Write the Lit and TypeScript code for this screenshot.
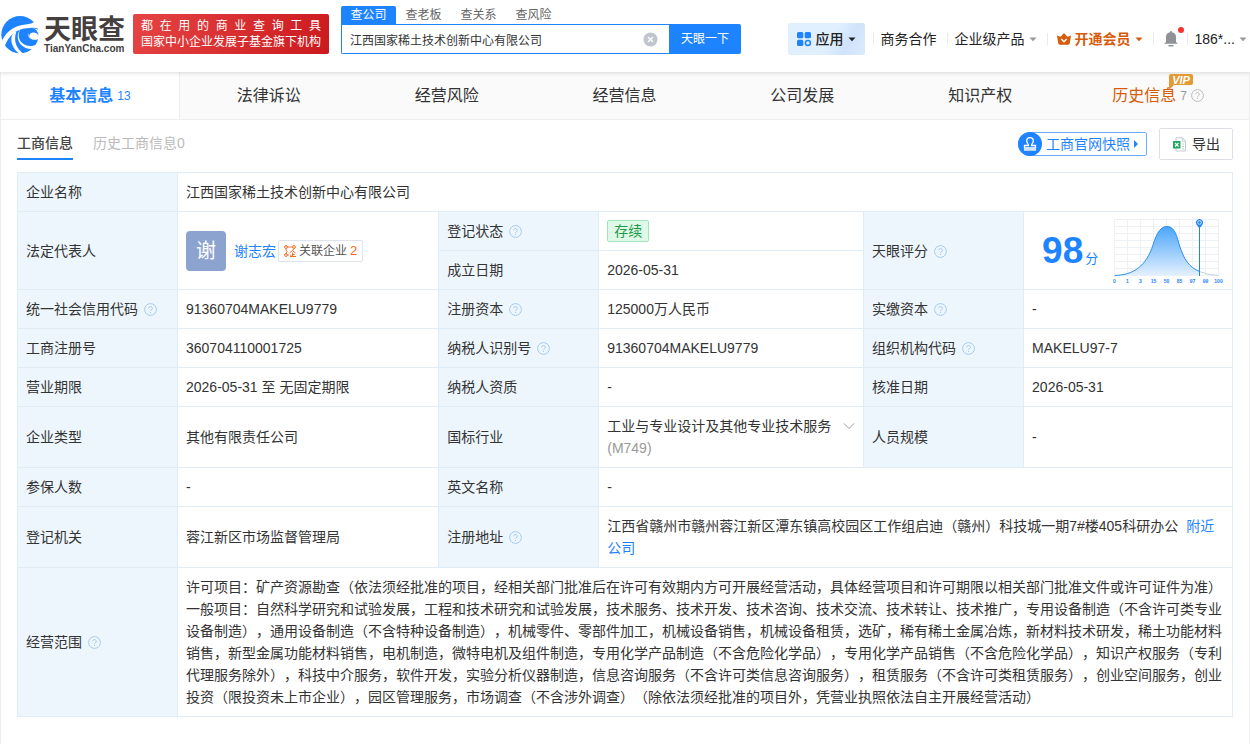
import { LitElement, html, css, svg } from "lit";
import { customElement, state } from "lit/decorators.js";

const base = css`
  * { box-sizing: border-box; }
  a { color: inherit; text-decoration: none; }
  button, input {
    font: inherit; color: inherit; margin: 0; padding: 0;
    border: 0; background: none; border-radius: 0;
  }
  button { cursor: pointer; }
  svg { display: block; flex: none; }
`;

const caret = html`<svg width="8" height="5" viewBox="0 0 8 5" aria-hidden="true"><path d="M.5.5h7L4 4.300z" fill="currentColor"/></svg>`;

@customElement("help-icon")
class HelpIcon extends LitElement {
  static styles = css`
    :host { display: inline-block; width: 13px; height: 13px; color: #a3cbee; vertical-align: -2px; }
    svg { display: block; width: 100%; height: 100%; }
  `;
  render() {
    return html`<svg viewBox="0 0 13 13" fill="none" stroke="currentColor">
      <circle cx="6.500" cy="6.500" r="5.900"/>
      <path d="M4.700 5.300a1.800 1.700 0 1 1 2.800 1.400c-.7.5-1 .7-1 1.400"/>
      <path d="M6.500 9v1"/>
    </svg>`;
  }
}

@customElement("site-header")
class SiteHeader extends LitElement {
  static styles = [base, css`
    :host { display: block; position: relative; background: #fff; box-shadow: 0 1px 4px rgba(0, 0, 0, 0.14); }
    .bar { display: flex; align-items: flex-end; padding: 6px 3px 18px 0; }
    .logo { display: flex; align-items: center; gap: 4px; color: #453f3f; }
    .wordmark { display: flex; flex-direction: column; padding-top: 2px; }
    .name { font-size: 27px; font-weight: 700; line-height: 28px; }
    .domain { font-size: 10px; font-weight: 700; line-height: 10px; }
    .slogan {
      margin-left: 8px; padding: 4px 8px; width: 196px; height: 40px; border-radius: 2px;
      background: linear-gradient(110deg, #e64444, #cb1a1e); color: #fff;
      font-size: 12px; line-height: 16px;
    }
    .slogan div { text-align-last: justify; white-space: nowrap; }
    .search { margin-left: 12px; flex: 0 1 400px; min-width: 280px; }
    .kinds { display: flex; font-size: 12px; line-height: 18px; color: #666; }
    .kinds button { width: 55px; }
    .kinds .on { background: #1e83ff; color: #fff; border-radius: 2px 2px 0 0; }
    .field { display: flex; height: 30px; font-size: 12px; }
    .box {
      flex: 1; min-width: 0; display: flex; align-items: center; padding: 0 11px 0 8px;
      border: 1px solid #1e83ff; border-right: 0; border-radius: 0 0 0 2px;
    }
    .box input { flex: 1; min-width: 0; height: 28px; outline: 0; color: #333; }
    .go { width: 72px; background: #1e83ff; color: #fff; border-radius: 0 2px 2px 0; }
    nav { margin-left: auto; display: flex; align-items: center; height: 30px; font-size: 14px; color: #222; white-space: nowrap; }
    .apps {
      display: flex; align-items: center; gap: 4px; height: 32px; padding: 0 9px 0 8px; margin-right: 8px;
      border-radius: 2px; background: linear-gradient(120deg, #e0f0ff 55%, #cfe3fb 75%, #dcebfd); font-weight: 500;
    }
    .item { display: flex; align-items: center; gap: 4px; padding: 0 10px 0 8px; position: relative; }
    .item::before { content: ""; position: absolute; left: 0; top: 50%; margin-top: -6px; width: 1px; height: 12px; background: #e8eaee; }
    .grey { color: #999; display: flex; }
    .vip { color: #d65b0a; font-weight: 700; padding-left: 10px; }
    .bell { color: #8f9296; padding: 0 9px 0 11px; }
    .dot { position: absolute; right: 3px; top: -4px; width: 6px; height: 6px; border-radius: 50%; background: #f7322f; }
    .user { padding-right: 0; }
  `];

  @state() kind = 0;

  render() {
    return html`<header class="bar">
      <a class="logo" href="#" aria-label="天眼查">
        <svg width="40" height="40" viewBox="0 6 120 120">
          <circle cx="60" cy="68" r="56" fill="#1e83ff"/>
          <g fill="#fff">
            <path d="M2 96C14 62 38 42 72 38C86 37 94 36 106 28L122 52C106 46 92 46 80 49C48 52 26 70 13 106z"/>
            <path d="M41 61C27 82 34 108 60 127L70 125C47 107 40 84 49 59z"/>
            <path d="M62 50C52 66 54 88 74 98C90 106 108 103 122 88L114 106C98 114 76 112 63 98C50 84 50 64 62 50z"/>
            <path d="M122 60C108 44 88 48 84 62C82 74 92 84 104 83C110 83 116 82 122 78z"/>
          </g>
          <path d="M90 48C104 46 114 56 116 70C112 64 104 60 96 62C90 63 87 68 88 74C82 62 82 52 90 48z" fill="#1e83ff"/>
        </svg>
        <span class="wordmark"><span class="name">天眼查</span><span class="domain">TianYanCha.com</span></span>
      </a>
      <div class="slogan"><div>都 在 用 的 商 业 查 询 工 具</div><div>国家中小企业发展子基金旗下机构</div></div>
      <form class="search" @submit=${(e: Event) => e.preventDefault()}>
        <div class="kinds">${["查公司", "查老板", "查关系", "查风险"].map((t, i) => html`
          <button type="button" class=${i === this.kind ? "on" : ""} @click=${() => (this.kind = i)}>${t}</button>`)}
        </div>
        <div class="field">
          <div class="box">
            <input type="text" aria-label="搜索" value="江西国家稀土技术创新中心有限公司">
            <button type="button" aria-label="清空"><svg width="15" height="15" viewBox="0 0 15 15"><circle cx="7.500" cy="7.500" r="7" fill="#c0c4cc"/><path d="M5 5l5 5M10 5l-5 5" stroke="#fff" stroke-width="1.400"/></svg></button>
          </div>
          <button class="go" type="submit">天眼一下</button>
        </div>
      </form>
      <nav>
        <button class="apps">
          <svg width="16" height="16" viewBox="0 0 16 16" fill="#1e83ff"><rect x="1" y="1" width="6.300" height="6.300" rx="1.500"/><rect x="8.700" y="1" width="6.300" height="6.300" rx="1.500"/><rect x="1" y="8.700" width="6.300" height="6.300" rx="1.500"/><circle cx="11.900" cy="11.900" r="2.500" fill="none" stroke="#1e83ff" stroke-width="1.500"/></svg>
          应用${caret}
        </button>
        <a class="item" href="#">商务合作</a>
        <a class="item" href="#">企业级产品<span class="grey">${caret}</span></a>
        <a class="item vip" href="#">
          <svg width="14" height="14" viewBox="0 0 14 14"><path d="M0 3.500l3.700 1.200L7 1l3.300 3.700L14 3.500 12.800 11q-.2 1.800-1.600 1.800H2.800Q1.400 12.800 1.200 11z" fill="#d65b0a"/><path d="M4.300 7l2.700 2.700L9.700 7" fill="none" stroke="#fff" stroke-width="1.500"/></svg>
          开通会员${caret}
        </a>
        <a class="item bell" href="#" aria-label="消息">
          <svg width="14" height="16" viewBox="0 0 14 16" fill="currentColor"><path d="M6.200 0h1.600v1.300A4.800 4.800 0 0 1 12 6v5l2 1.800H0L2 11V6a4.800 4.800 0 0 1 4.200-4.700zM4.500 14h5v1.500h-5z"/></svg>
          <span class="dot"></span>
        </a>
        <a class="item user" href="#">186*...<span class="grey">${caret}</span></a>
      </nav>
    </header>`;
  }
}

@customElement("section-tabs")
class SectionTabs extends LitElement {
  static styles = [base, css`
    :host { display: block; }
    .tabs { display: flex; height: 48px; padding-right: 2px; background: #fafafa; border-bottom: 1px solid #eee; }
    .tab { flex: 1; display: flex; align-items: center; justify-content: center; gap: 4px; font-size: 16px; color: #333; white-space: nowrap; }
    .on { background: #fff; color: #1e83ff; font-weight: 700; border-right: 1px solid #eee; }
    .count { font-size: 12px; font-weight: 400; }
    .history { color: #d65b0a; }
    .history .count { color: #999; }
    .history help-icon { color: #bbb; }
    .anchor { position: relative; }
    .badge { position: absolute; left: 57px; top: -11px; }
  `];
  render() {
    return html`<nav class="tabs">
      <a class="tab on" href="#">基本信息<span class="count">13</span></a>
      ${["法律诉讼", "经营风险", "经营信息", "公司发展", "知识产权"].map(t => html`<a class="tab" href="#">${t}</a>`)}
      <a class="tab history" href="#">
        <span class="anchor">历史信息
          <svg class="badge" width="24" height="18" viewBox="0 0 24 18"><path d="M2 0h20q2 0 2 2v7q0 2-2 2H5l-4 4q-1 1-1-1V2q0-2 2-2z" fill="#e39a33"/><text x="12" y="9.500" text-anchor="middle" font-family="Liberation Sans, sans-serif" font-size="11" font-weight="700" font-style="italic" fill="#fff">VIP</text></svg></span>
        <span class="count">7</span><help-icon></help-icon>
      </a>
    </nav>`;
  }
}

const TICKS = ["0", "1", "3", "15", "50", "85", "97", "99", "100"];

@customElement("score-chart")
class ScoreChart extends LitElement {
  static styles = css`
    :host { display: block; }
    svg { display: block; }
  `;
  render() {
    return html`<svg width="114" height="66" viewBox="0 0 114 66" role="img" aria-label="天眼评分分布">
      <defs><linearGradient id="fill" x1="0" y1="0" x2="0" y2="1"><stop offset="0" stop-color="#4ba5fb"/><stop offset="1" stop-color="#e3f0fd"/></linearGradient></defs>
      <g stroke="#edf1f6">
        ${TICKS.map((_, i) => svg`<path d=${`M${4.500 + i * 13} 1.500v56`}/>`)}
        ${TICKS.map((_, i) => svg`<path d=${`M4.500 ${1.500 + i * 7}h104`}/>`)}
      </g>
      <path d="M4.500 57.500C24 57 36 48 43 27C47 14 51 8.500 57 8.500C63 8.500 66 14 69 26C74 42 79 49 89.500 53.500V57.500z" fill="url(#fill)"/>
      <path d="M4.500 57.500C24 57 36 48 43 27C47 14 51 8.500 57 8.500C63 8.500 66 14 69 26C74 42 79 49 89.500 53.500" fill="none" stroke="#2b8ff2"/>
      <path d="M89.500 53.500Q97 57 108.500 57.500" fill="none" stroke="#c3d2e0"/>
      <path d="M89.500 9v49" stroke="#1e83ff"/>
      <path d="M89.500 10.500l-3-4.100a3.500 3.500 0 1 1 6 0z" fill="#1e83ff"/>
      <circle cx="89.500" cy="4.500" r="1.800" fill="#1e83ff" stroke="#fff" stroke-width=".8"/>
      <g font-family="Liberation Sans, sans-serif" font-size="5" font-weight="700" fill="#1e83ff" text-anchor="middle">
        ${TICKS.map((t, i) => svg`<text x=${4.500 + i * 13} y="65">${t}</text>`)}
      </g>
    </svg>`;
  }
}

@customElement("company-table")
class CompanyTable extends LitElement {
  static styles = [base, css`
    :host { display: block; }
    table { width: 100%; table-layout: fixed; border-collapse: collapse; font-size: 14px; line-height: 22px; color: #333; }
    .key { width: 160px; }
    .a { width: 21.500%; }
    .b { width: 21.800%; }
    th, td { border: 1px solid #e0ecf6; padding: 8px; text-align: left; font-weight: 400; vertical-align: middle; text-spacing-trim: space-all; }
    th { background: #eef6fd; }
    th help-icon { margin-left: 6px; }
    .link { color: #1e83ff; }
    .near { margin-left: 8px; }
    .person { display: flex; align-items: center; }
    .avatar { width: 40px; height: 40px; margin-right: 8px; border-radius: 4px; background: #8ca3d0; color: #fff; font-size: 20px; line-height: 40px; text-align: center; }
    .related {
      display: flex; align-items: center; gap: 3px; height: 22px; padding: 0 5px; margin-left: 2px;
      border: 1px solid #dfe3ee; border-radius: 2px; font-size: 12px; color: #555;
    }
    .related b { font-weight: 400; font-size: 13px; color: #fa6a24; }
    .status { display: inline-block; padding: 0 6px; line-height: 20px; border: 1px solid #a3e4bb; border-radius: 2px; background: #dff9e8; color: #1b9a48; vertical-align: top; }
    .industry { display: flex; justify-content: space-between; gap: 4px; }
    .industry svg { margin-top: 5px; }
    .code { color: #999; }
    .score-cell { padding: 4px 8px; }
    .score { display: flex; align-items: center; justify-content: space-between; color: #1e83ff; padding-left: 10px; }
    .score strong { font-size: 37px; line-height: 40px; }
    .score span { font-size: 13px; margin-left: 2px; }
    .figure { white-space: nowrap; }
  `];
  render() {
    const th = (t: string, help = false, rows = 1) => html`<th scope="row" rowspan=${rows}>${t}${help ? html`<help-icon></help-icon>` : ""}</th>`;
    return html`<table>
      <colgroup><col class="key"><col class="a"><col class="key"><col class="b"><col class="key"><col></colgroup>
      <tbody>
        <tr>${th("企业名称")}<td colspan="5">江西国家稀土技术创新中心有限公司</td></tr>
        <tr>
          ${th("法定代表人", false, 2)}
          <td rowspan="2"><div class="person">
            <span class="avatar">谢</span><a class="link" href="#">谢志宏</a>
            <a class="related" href="#">
              <svg width="12" height="12" viewBox="0 0 12 12" fill="none" stroke="#fa6a24"><circle cx="2" cy="2" r="1.400"/><circle cx="10" cy="2" r="1.400"/><circle cx="2" cy="10" r="1.400"/><path d="M3.500 2h5M2 3.500v1.500q2 1 0 3.500M10 3.500L9 5M3.500 10H5M5.500 8L8.500 5.500 11.500 8M6 11.500h6M8.500 7.500v4M6.800 9.500v2M8.500 9.500h2.200"/></svg>
              关联企业<b>2</b></a>
          </div></td>
          ${th("登记状态", true)}<td><span class="status">存续</span></td>
          ${th("天眼评分", true, 2)}
          <td class="score-cell" rowspan="2"><div class="score"><div class="figure"><strong>98</strong><span>分</span></div><score-chart></score-chart></div></td>
        </tr>
        <tr>${th("成立日期")}<td>2026-05-31</td></tr>
        <tr>${th("统一社会信用代码", true)}<td>91360704MAKELU9779</td>${th("注册资本", true)}<td>125000万人民币</td>${th("实缴资本", true)}<td>-</td></tr>
        <tr>${th("工商注册号")}<td>360704110001725</td>${th("纳税人识别号", true)}<td>91360704MAKELU9779</td>${th("组织机构代码", true)}<td>MAKELU97-7</td></tr>
        <tr>${th("营业期限")}<td>2026-05-31 至 无固定期限</td>${th("纳税人资质")}<td>-</td>${th("核准日期")}<td>2026-05-31</td></tr>
        <tr>${th("企业类型")}<td>其他有限责任公司</td>${th("国标行业")}
          <td><div class="industry"><div>工业与专业设计及其他专业技术服务 <span class="code">(M749)</span></div>
            <svg width="12" height="12" viewBox="0 0 12 12" fill="none" stroke="#999"><path d="M1 3.500l5 5 5-5"/></svg></div></td>
          ${th("人员规模")}<td>-</td></tr>
        <tr>${th("参保人数")}<td>-</td>${th("英文名称")}<td colspan="3">-</td></tr>
        <tr>${th("登记机关")}<td>蓉江新区市场监督管理局</td>${th("注册地址", true)}
          <td colspan="3">江西省赣州市赣州蓉江新区潭东镇高校园区工作组启迪（赣州）科技城一期7#楼405科研办公<a class="link near" href="#">附近公司</a></td></tr>
        <tr>${th("经营范围", true)}
          <td colspan="5">许可项目：矿产资源勘查（依法须经批准的项目，经相关部门批准后在许可有效期内方可开展经营活动，具体经营项目和许可期限以相关部门批准文件或许可证件为准）<br>一般项目：自然科学研究和试验发展，工程和技术研究和试验发展，技术服务、技术开发、技术咨询、技术交流、技术转让、技术推广，专用设备制造（不含许可类专业设备制造），通用设备制造（不含特种设备制造），机械零件、零部件加工，机械设备销售，机械设备租赁，选矿，稀有稀土金属冶炼，新材料技术研发，稀土功能材料销售，新型金属功能材料销售，电机制造，微特电机及组件制造，专用化学产品制造（不含危险化学品），专用化学产品销售（不含危险化学品），知识产权服务（专利代理服务除外），科技中介服务，软件开发，实验分析仪器制造，信息咨询服务（不含许可类信息咨询服务），租赁服务（不含许可类租赁服务），创业空间服务，创业投资（限投资未上市企业），园区管理服务，市场调查（不含涉外调查）（除依法须经批准的项目外，凭营业执照依法自主开展经营活动）</td></tr>
      </tbody>
    </table>`;
  }
}

@customElement("app-root")
class AppRoot extends LitElement {
  static styles = [base, css`
    :host {
      display: flex; flex-direction: column; min-height: 100vh; background: #fff; color: #333;
      font-family: "Liberation Sans", "Noto Sans CJK SC", sans-serif; font-size: 14px; line-height: 22px;
    }
    main { flex: 1; border: solid #eee; border-width: 0 1px; }
    .content { padding: 0 16px; }
    .tools { display: flex; align-items: center; height: 52px; gap: 20px; }
    .sub { line-height: 26px; padding: 2px 0; border-bottom: 2px solid transparent; color: #bbb; margin-top: -4px; }
    .current { color: #444; font-weight: 500; border-color: #1e83ff; }
    .actions { margin: -4px 0 0 auto; display: flex; align-items: center; gap: 12px; }
    .snapshot { display: flex; align-items: center; gap: 4px; height: 24px; padding-right: 8px; border: 1px solid #6cb0fd; border-radius: 12px 2px 2px 12px; color: #1e83ff; }
    .snapshot .stamp { margin-left: -1px; }
    .export { display: flex; align-items: center; gap: 5px; height: 32px; padding: 0 12px; border: 1px solid #dcdfea; border-radius: 2px; }
  `];
  render() {
    return html`
      <site-header></site-header>
      <main>
        <section-tabs></section-tabs>
        <div class="content">
          <div class="tools">
            <a class="sub current" href="#">工商信息</a>
            <a class="sub" href="#">历史工商信息0</a>
            <div class="actions">
              <button class="snapshot">
                <svg class="stamp" width="24" height="24" viewBox="0 0 24 24"><circle cx="12" cy="12" r="12" fill="#1e83ff"/><path d="M10.500 13.500c.3-1.500-1.800-2.400-1.800-4.500a3.300 3.300 0 0 1 6.600 0c0 2.100-2.100 3-1.800 4.500h4v2.500h-11v-2.500z" fill="none" stroke="#fff" stroke-width="1.300"/><path d="M6 16h12v2.800H6z" fill="#d3e7ff"/></svg>
                工商官网快照
                <svg width="4" height="8" viewBox="0 0 4 8"><path d="M0 0l4 4-4 4z" fill="#1e83ff"/></svg>
              </button>
              <button class="export">
                <svg width="15" height="15" viewBox="0 0 15 15"><path d="M4 .8h6.500L13.500 4v10H4z" fill="#fff" stroke="#c6cad3"/><path d="M10.300 1v3.200h3M10 7h2M10 9.500h2M10 12h2" fill="none" stroke="#c6cad3"/><rect x="1" y="4" width="7.500" height="7.500" rx=".5" fill="#23a65f"/><path d="M3 6l3.500 3.500M6.500 6L3 9.500" stroke="#fff" stroke-width="1.100"/></svg>
                导出
              </button>
            </div>
          </div>
          <company-table></company-table>
        </div>
      </main>`;
  }
}
